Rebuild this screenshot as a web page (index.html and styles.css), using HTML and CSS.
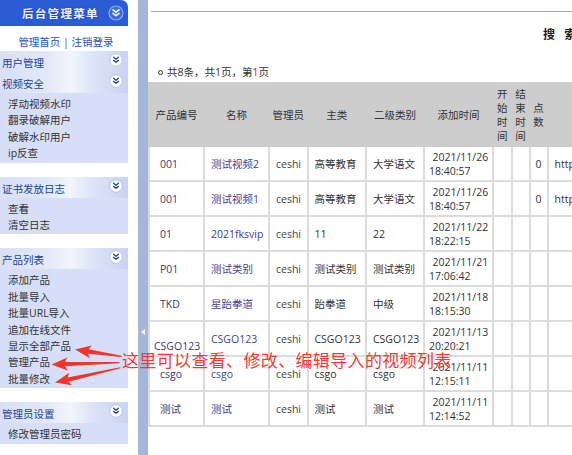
FILE: index.html
```html
<!DOCTYPE html>
<html lang="zh-CN">
<head>
<meta charset="utf-8">
<title>后台管理</title>
<link rel="stylesheet" href="styles.css">
</head>
<body>
<div class="page">
  <aside class="sidebar">
    <div class="side-head">
      <span class="side-title">后台管理菜单</span>
      <svg class="chev-head" viewBox="0 0 16 16" width="16" height="16"><circle cx="8" cy="8" r="7" fill="#3d69d9" stroke="#8eaef0" stroke-width="1.2"/><path d="M5 4.8 8 7.2 11 4.8 M5 8.3 8 10.7 11 8.3" fill="none" stroke="#fff" stroke-width="1.5" stroke-linecap="round" stroke-linejoin="round"/></svg>
    </div>
    <div class="side-links"><a href="#">管理首页</a> | <a href="#">注销登录</a></div>

    <div class="band"><span class="band-title">用户管理</span><svg class="chev" viewBox="0 0 14 14" width="14" height="14"><circle cx="7" cy="7" r="6.3" fill="#fff" stroke="#b4c3ea" stroke-width="1"/><path d="M4.6 4.3 7 6.2 9.4 4.3 M4.6 7.4 7 9.3 9.4 7.4" fill="none" stroke="#24479f" stroke-width="1.4" stroke-linecap="round" stroke-linejoin="round"/></svg></div>
    <div class="band"><span class="band-title">视频安全</span><svg class="chev" viewBox="0 0 14 14" width="14" height="14"><circle cx="7" cy="7" r="6.3" fill="#fff" stroke="#b4c3ea" stroke-width="1"/><path d="M4.6 4.3 7 6.2 9.4 4.3 M4.6 7.4 7 9.3 9.4 7.4" fill="none" stroke="#24479f" stroke-width="1.4" stroke-linecap="round" stroke-linejoin="round"/></svg></div>
    <ul class="panel">
      <li>浮动视频水印</li>
      <li>翻录破解用户</li>
      <li>破解水印用户</li>
      <li>ip反查</li>
    </ul>

    <div class="band"><span class="band-title">证书发放日志</span><svg class="chev" viewBox="0 0 14 14" width="14" height="14"><circle cx="7" cy="7" r="6.3" fill="#fff" stroke="#b4c3ea" stroke-width="1"/><path d="M4.6 4.3 7 6.2 9.4 4.3 M4.6 7.4 7 9.3 9.4 7.4" fill="none" stroke="#24479f" stroke-width="1.4" stroke-linecap="round" stroke-linejoin="round"/></svg></div>
    <ul class="panel">
      <li>查看</li>
      <li>清空日志</li>
    </ul>

    <div class="band"><span class="band-title">产品列表</span><svg class="chev" viewBox="0 0 14 14" width="14" height="14"><circle cx="7" cy="7" r="6.3" fill="#fff" stroke="#b4c3ea" stroke-width="1"/><path d="M4.6 4.3 7 6.2 9.4 4.3 M4.6 7.4 7 9.3 9.4 7.4" fill="none" stroke="#24479f" stroke-width="1.4" stroke-linecap="round" stroke-linejoin="round"/></svg></div>
    <ul class="panel">
      <li>添加产品</li>
      <li>批量导入</li>
      <li>批量URL导入</li>
      <li>追加在线文件</li>
      <li>显示全部产品</li>
      <li>管理产品</li>
      <li>批量修改</li>
    </ul>

    <div class="band"><span class="band-title">管理员设置</span><svg class="chev" viewBox="0 0 14 14" width="14" height="14"><circle cx="7" cy="7" r="6.3" fill="#fff" stroke="#b4c3ea" stroke-width="1"/><path d="M4.6 4.3 7 6.2 9.4 4.3 M4.6 7.4 7 9.3 9.4 7.4" fill="none" stroke="#24479f" stroke-width="1.4" stroke-linecap="round" stroke-linejoin="round"/></svg></div>
    <ul class="panel">
      <li>修改管理员密码</li>
    </ul>
  </aside>

  <div class="divider"><span class="tri"></span></div>

  <main class="content">
    <div class="topline"></div>
    <div class="search">搜&nbsp;&nbsp;&nbsp;索</div>
    <div class="count"><span class="bullet"></span>共8条，共1页，第<span class="red">1</span>页</div>
    <table class="grid">
      <colgroup>
        <col class="w1"><col class="w2"><col class="w3"><col class="w4"><col class="w5"><col class="w6"><col class="w7"><col class="w8"><col class="w9"><col class="w10">
      </colgroup>
      <tr class="h">
        <th>产品编号</th><th>名称</th><th class="nw">管理员</th><th>主类</th><th>二级类别</th><th>添加时间</th><th>开始时间</th><th>结束时间</th><th>点数</th><th></th>
      </tr>
      <tr>
        <td class="id">001</td><td class="nm">测试视频2</td><td class="ad">ceshi</td><td>高等教育</td><td>大学语文</td><td class="tm">2021/11/26<br>18:40:57</td><td></td><td></td><td class="num">0</td><td class="url">http://</td>
      </tr>
      <tr>
        <td class="id">001</td><td class="nm">测试视频1</td><td class="ad">ceshi</td><td>高等教育</td><td>大学语文</td><td class="tm">2021/11/26<br>18:40:57</td><td></td><td></td><td class="num">0</td><td class="url">http://</td>
      </tr>
      <tr>
        <td class="id">01</td><td class="nm">2021fksvip</td><td class="ad">ceshi</td><td>11</td><td>22</td><td class="tm">2021/11/22<br>18:22:15</td><td></td><td></td><td></td><td></td>
      </tr>
      <tr>
        <td class="id">P01</td><td class="nm">测试类别</td><td class="ad">ceshi</td><td>测试类别</td><td>测试类别</td><td class="tm">2021/11/21<br>17:06:42</td><td></td><td></td><td></td><td></td>
      </tr>
      <tr>
        <td class="id">TKD</td><td class="nm">星跆拳道</td><td class="ad">ceshi</td><td>跆拳道</td><td>中级</td><td class="tm">2021/11/18<br>18:15:30</td><td></td><td></td><td></td><td></td>
      </tr>
      <tr>
        <td class="id">&nbsp;<br>CSGO123</td><td class="nm">CSGO123</td><td class="ad">ceshi</td><td>CSGO123</td><td>CSGO123</td><td class="tm">2021/11/13<br>20:20:21</td><td></td><td></td><td></td><td></td>
      </tr>
      <tr>
        <td class="id">csgo</td><td class="nm">csgo</td><td class="ad">ceshi</td><td>csgo</td><td>csgo</td><td class="tm">2021/11/11<br>12:15:11</td><td></td><td></td><td></td><td></td>
      </tr>
      <tr>
        <td class="id">测试</td><td class="nm">测试</td><td class="ad">ceshi</td><td>测试</td><td>测试</td><td class="tm">2021/11/11<br>12:14:52</td><td></td><td></td><td></td><td></td>
      </tr>
    </table>
  </main>
</div>

<div class="annot">
  <svg class="arrows" width="572" height="455" viewBox="0 0 572 455">
    <g transform="translate(75 349.5) rotate(8.3)"><polygon points="0,0 16,-6.5 13.5,-2.2 47,-0.6 47,0.6 13.5,2.2 16,6.5"/></g>
    <g transform="translate(51.5 364.5) rotate(-1.5)"><polygon points="0,0 16,-6.5 13.5,-2.2 68,-0.6 68,0.6 13.5,2.2 16,6.5"/></g>
    <g transform="translate(55 382.5) rotate(-12.7)"><polygon points="0,0 16,-6.5 13.5,-2.2 67,-0.6 67,0.6 13.5,2.2 16,6.5"/></g>
  </svg>
  <div class="note">这里可以查看、修改、编辑导入的视频列表</div>
</div>
</body>
</html>
```

FILE: styles.css
```css
* { box-sizing: border-box; }
html, body { margin: 0; padding: 0; }
body {
  font-family: "Open Sans", "Noto Sans CJK SC", sans-serif;
  font-size: 10.5px;
  color: #333;
  background: #fff;
  width: 572px;
  height: 455px;
  overflow: hidden;
  position: relative;
}
.page { display: flex; height: 455px; }

/* sidebar */
.sidebar { width: 128px; flex: none; }
.side-head {
  display: flex;
  align-items: center;
  height: 26px;
  padding-left: 22px;
  background: #2c5bd6;
  border-top-right-radius: 7px;
}
.side-title {
  color: #eef3ff;
  font-weight: bold;
  font-size: 11.5px;
  letter-spacing: 1.3px;
  text-shadow: 0 0 2px #14398f;
}
.chev-head { margin: 0 4px 0 auto; }
.side-links {
  height: 25px;
  padding: 8px 0 0 4px;
  line-height: 16px;
  text-align: center;
  color: #1f52c1;
}
.side-links a { color: inherit; text-decoration: none; }

.band {
  display: flex;
  align-items: flex-start;
  height: 21px;
  background: linear-gradient(to right, #d9e0f5 0%, #e3e9f8 38%, #f3f5fc 55%, #dde4f7 72%, #c8d4f1 100%);
}
.band-title { padding: 4px 0 0 2px; line-height: 16px; color: #22439b; }
.chev { margin: 2px 5px 0 auto; }

.panel {
  list-style: none;
  margin: 0 0 14px;
  padding: 3px 0 1px;
  background: #d6dff7;
}
.panel li { padding-left: 8px; line-height: 16.4px; color: #333; }

/* divider */
.divider {
  flex: none;
  width: 10px;
  margin-left: 10px;
  padding-top: 329px;
  background: #a6b6d9;
}
.tri {
  display: block;
  width: 0;
  height: 0;
  margin-left: 3px;
  border-right: 4px solid #fff;
  border-top: 3.5px solid transparent;
  border-bottom: 3.5px solid transparent;
}

/* content */
.content { flex: 1; min-width: 0; overflow: hidden; }
.topline { margin: 11px 0 0 3px; border-top: 1px solid #a9a9a9; }
.search {
  padding: 15px 0 0 395px;
  line-height: 16px;
  font-size: 12px;
  font-weight: bold;
  color: #222;
  white-space: nowrap;
}
.count {
  display: flex;
  align-items: center;
  margin-top: 22px;
  padding-left: 10px;
  line-height: 14px;
  color: #333;
}
.bullet {
  width: 5px;
  height: 5px;
  margin-right: 4px;
  border: 1px solid #333;
  border-radius: 50%;
}
.red { color: #e00; }

.grid {
  margin-top: 3px;
  border-collapse: collapse;
  table-layout: fixed;
  width: 560px;
  line-height: 14px;
}
.w1 { width: 55px; }
.w2 { width: 65px; }
.w3 { width: 38.5px; }
.w4 { width: 58.5px; }
.w5 { width: 58px; }
.w6 { width: 69px; }
.w7 { width: 18.5px; }
.w8 { width: 18px; }
.w9 { width: 18px; }
.w10 { width: 161.5px; }
.grid tr { height: 35px; }
.grid tr.h { height: 63px; }
.grid th {
  background: #cdcdcd;
  border: 2px solid #cdcdcd;
  padding: 2px 2px;
  font-weight: normal;
  color: #333;
  text-align: center;
  vertical-align: middle;
}
.grid th.nw { white-space: nowrap; padding: 2px 0; }
.grid td {
  border: 2px solid #dcdcdc;
  padding: 0 4px;
  text-indent: 2px;
  vertical-align: middle;
  white-space: nowrap;
  color: #333;
}
.grid td.id { text-indent: 6px; color: #3a3a6e; }
.grid td.nm { color: #42428f; }
.grid td.ad { color: #444; }
.grid td.tm { text-indent: 3.5px; }
.grid td.num { text-align: center; text-indent: 0; }

/* annotation overlay */
.annot {
  position: absolute;
  left: 0;
  top: 0;
  width: 572px;
  height: 455px;
  pointer-events: none;
}
.arrows { display: block; fill: #f2352c; }
.note {
  position: absolute;
  left: 122px;
  top: 351px;
  font-size: 17px;
  line-height: 20px;
  letter-spacing: 0.35px;
  color: #f23a35;
  white-space: nowrap;
}
```
